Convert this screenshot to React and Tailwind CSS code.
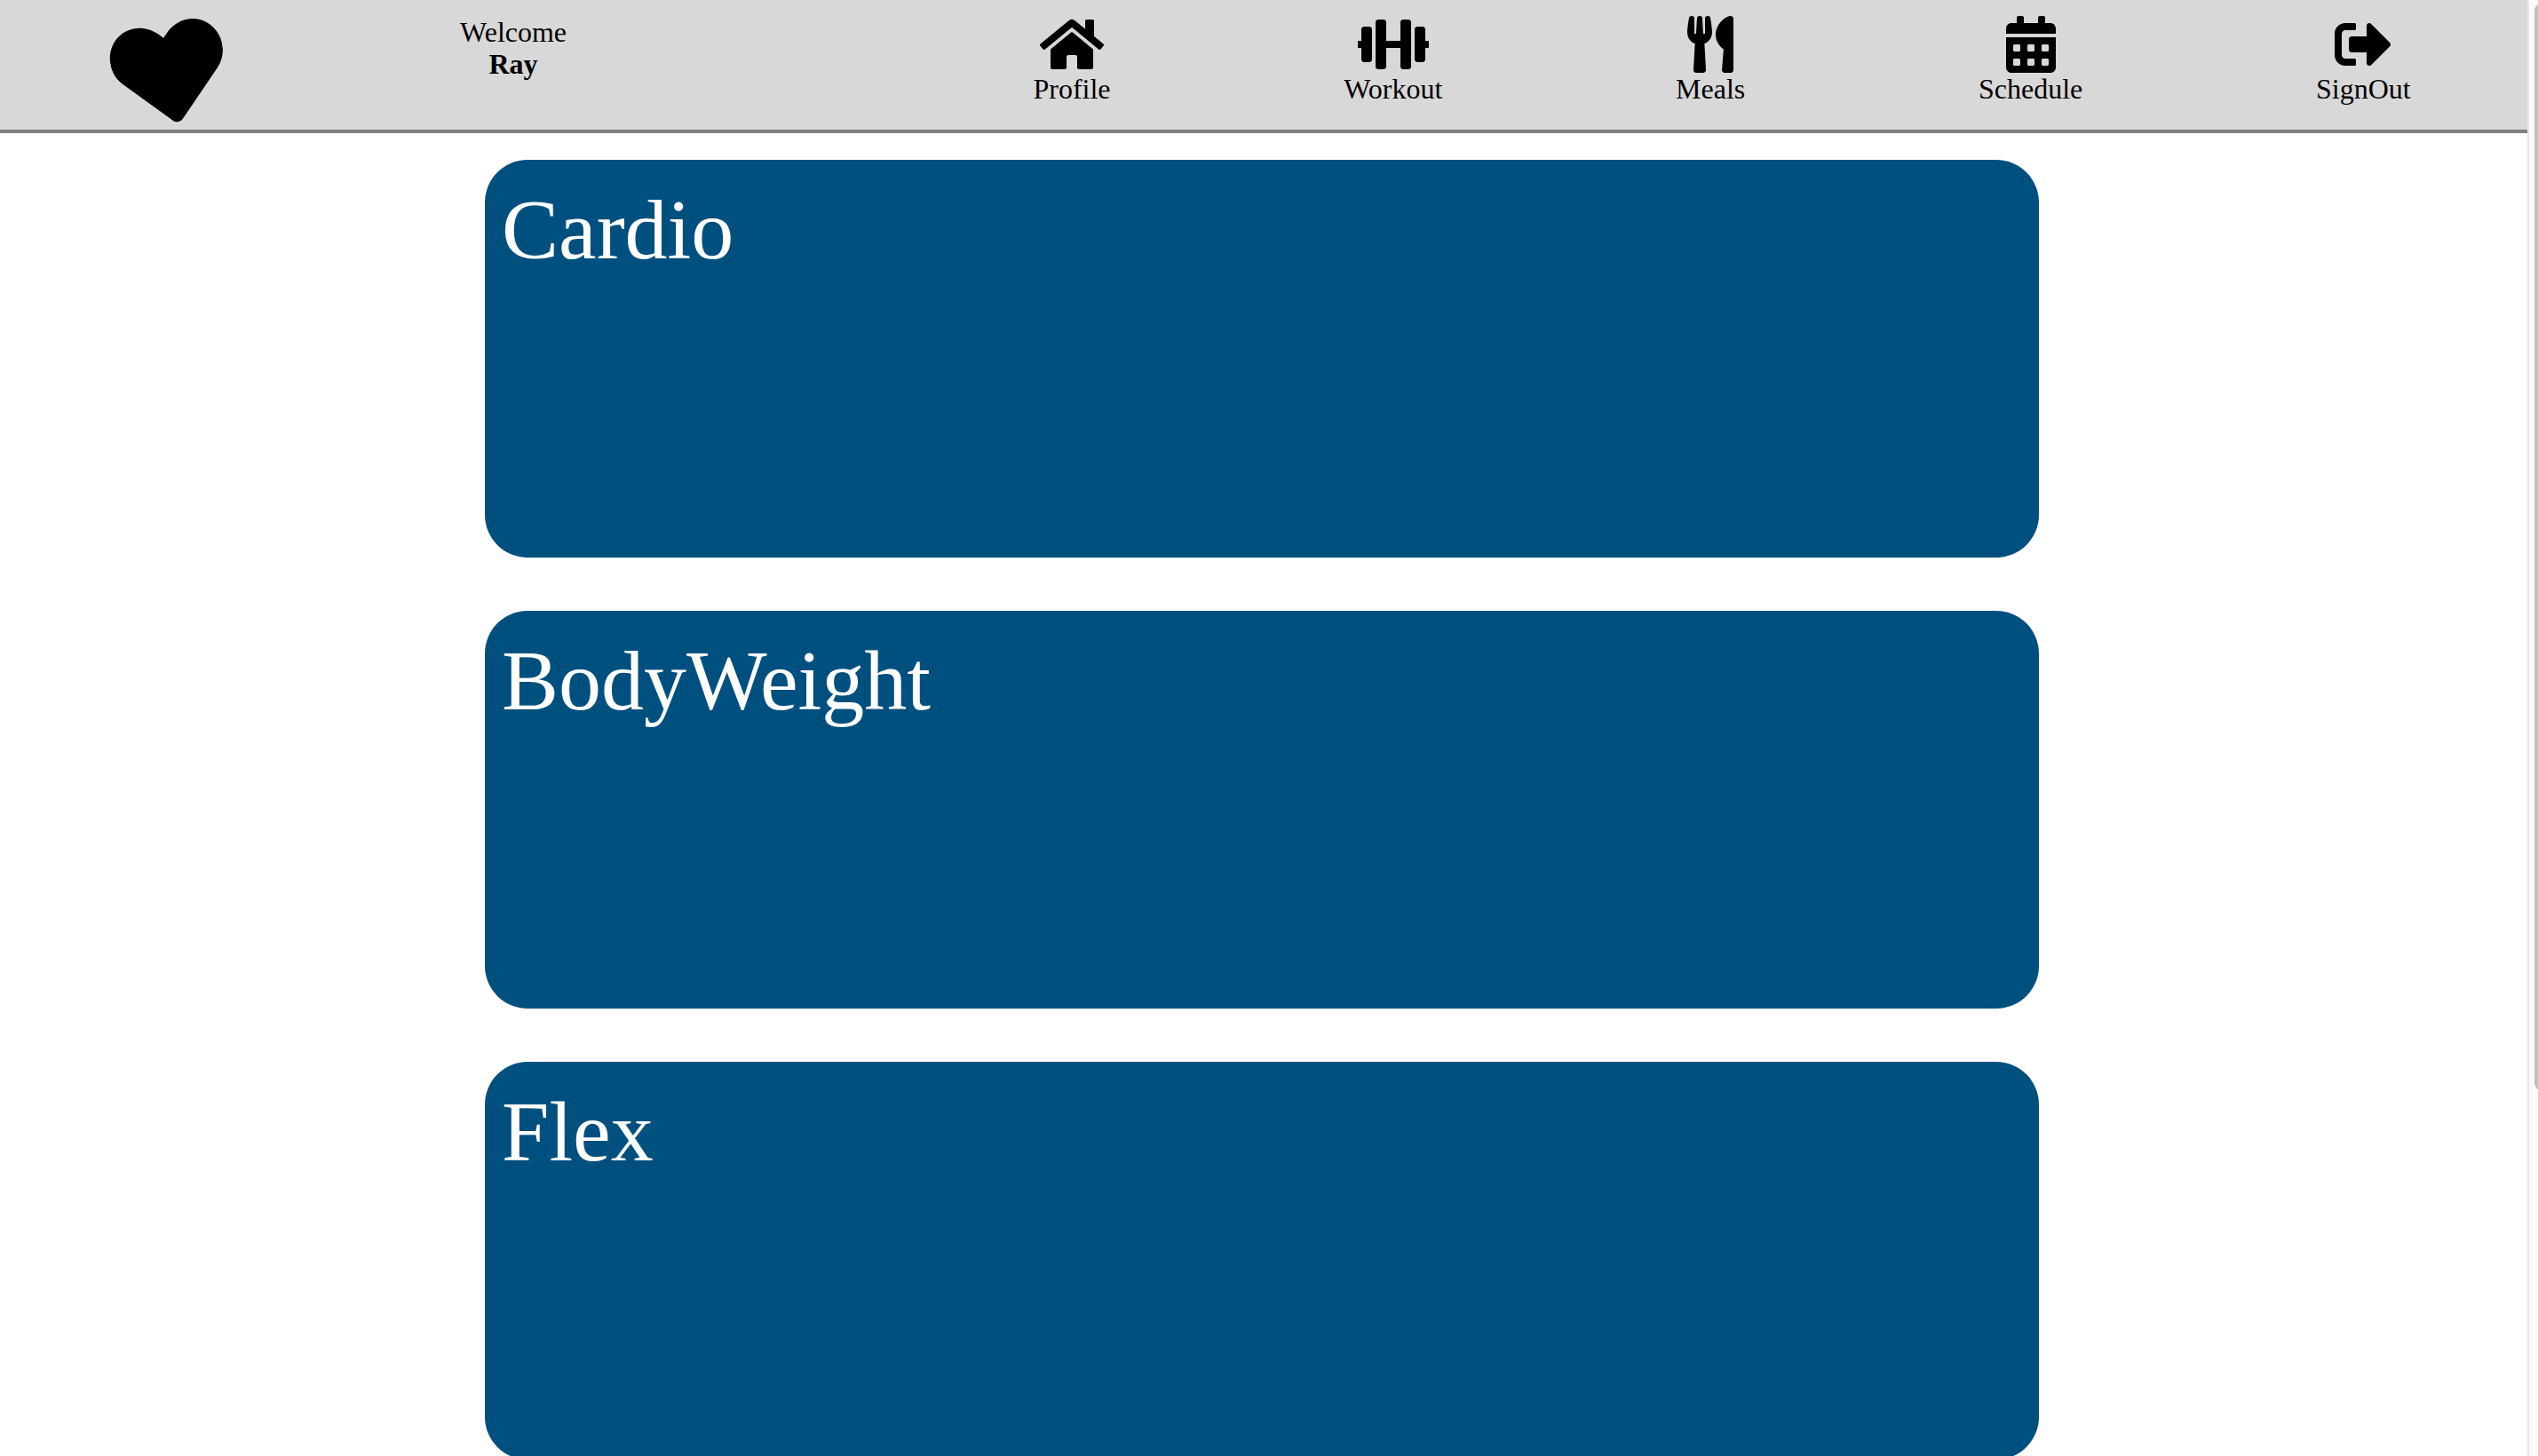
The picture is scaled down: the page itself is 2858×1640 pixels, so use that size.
import {
  FaCalendarAlt,
  FaDumbbell,
  FaHeart,
  FaHome,
  FaSignOutAlt,
  FaUtensils,
} from "react-icons/fa";

const links = [
  { label: "Profile", Icon: FaHome, size: "h-16 w-[72px]" },
  { label: "Workout", Icon: FaDumbbell, size: "h-16 w-20" },
  { label: "Meals", Icon: FaUtensils, size: "h-16 w-[52px]" },
  { label: "Schedule", Icon: FaCalendarAlt, size: "h-16 w-14" },
  { label: "SignOut", Icon: FaSignOutAlt, size: "h-16 w-16" },
];

const workouts = ["Cardio", "BodyWeight", "Flex"];

function Header() {
  return (
    <header className="flex h-[150px] items-start justify-around border-b-4 border-[#808080] bg-[#d8d8d8] pt-[18px] text-[32px] leading-9">
      <a href="#home" aria-label="Home" className="flex w-31 justify-end">
        <FaHeart className="h-32 w-32 shrink-0 -rotate-10" />
      </a>
      <p className="text-center">
        Welcome
        <strong className="block font-bold">Ray</strong>
      </p>
      <span aria-hidden="true" />
      {links.map(({ label, Icon, size }) => (
        <a key={label} href={`#${label.toLowerCase()}`} className="flex flex-col items-center">
          <Icon className={size} aria-hidden="true" />
          {label}
        </a>
      ))}
    </header>
  );
}

function WorkoutCard({ name }) {
  return (
    <button
      type="button"
      className="flex h-[448px] shrink-0 items-start rounded-[48px] bg-[#00507f] px-[19px] pt-6 text-left text-8xl leading-[110px] text-white"
    >
      {name}
    </button>
  );
}

function Scrollbar() {
  return (
    <div aria-hidden="true" className="flex w-3 shrink-0 overflow-hidden border-l-2 border-[#e8e8e8] bg-[#fafafa] py-1 pl-[6px]">
      <div className="h-[75%] w-4 shrink-0 rounded-full bg-[#c1c1c1]" />
    </div>
  );
}

export default function App() {
  return (
    <div className="flex h-screen overflow-hidden bg-white font-['Liberation_Serif',serif] text-black">
      <div className="min-w-0 flex-1 overflow-hidden">
        <Header />
        <main className="mr-[550px] ml-[546px] flex flex-col gap-[60px] pt-[30px]">
          {workouts.map((name) => (
            <WorkoutCard key={name} name={name} />
          ))}
        </main>
      </div>
      <Scrollbar />
    </div>
  );
}
